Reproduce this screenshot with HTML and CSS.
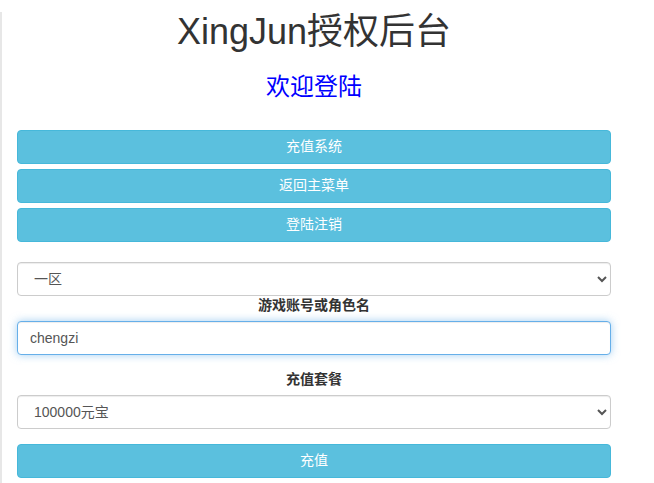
FILE: index.html
```html
<!DOCTYPE html>
<html lang="zh-CN">
<head>
    <meta charset="UTF-8">
    <meta name="viewport" content="width=device-width, initial-scale=1.0">
    <title>XingJun授权后台</title>
    <link rel="stylesheet" href="styles.css">
</head>
<body>
    <div class="page">
        <div class="panel">
            <h1 class="title">XingJun授权后台</h1>
            <h3 class="welcome">欢迎登陆</h3>

            <div class="menu">
                <button class="btn">充值系统</button>
                <button class="btn">返回主菜单</button>
                <button class="btn">登陆注销</button>
            </div>

            <form class="pay-form">
                <select class="form-control">
                    <option>一区</option>
                    <option>二区</option>
                </select>
                <label class="form-label">游戏账号或角色名</label>
                <input class="form-control focused" type="text" value="chengzi">

                <div class="form-group">
                    <label class="form-label">充值套餐</label>
                    <select class="form-control">
                        <option>100000元宝</option>
                        <option>50000元宝</option>
                    </select>
                </div>

                <button type="button" class="btn">充值</button>
            </form>
        </div>
    </div>
</body>
</html>
```

FILE: styles.css
```css
* {
    box-sizing: border-box;
}

body {
    margin: 0;
    background: #fff;
    font-family: "Liberation Sans", "Noto Sans CJK SC", sans-serif;
    font-size: 14px;
    line-height: 1.42857;
    color: #333;
}

.page {
    min-height: 100vh;
    border-left: 2px solid #e7e7e7;
    padding-left: 15px;
}

.panel {
    width: 594px;
}

.title {
    margin: 12px 0 0;
    font-size: 36px;
    font-weight: 400;
    line-height: 1.1;
    text-align: center;
    color: #333;
}

.welcome {
    margin: 22px 0 0;
    font-size: 24px;
    font-weight: 400;
    line-height: 1.1;
    text-align: center;
    color: #0000ff;
}

.menu {
    display: flex;
    flex-direction: column;
    gap: 5px;
    margin-top: 30px;
}

.btn {
    display: block;
    width: 100%;
    height: 34px;
    padding: 6px 12px;
    font-family: inherit;
    font-size: 14px;
    line-height: 1.42857;
    color: #fff;
    background: #5bc0de;
    border: 1px solid #46b8da;
    border-radius: 4px;
    cursor: pointer;
}

.pay-form {
    margin-top: 20px;
}

.form-control {
    display: block;
    width: 100%;
    height: 34px;
    padding: 6px 12px;
    font-family: inherit;
    font-size: 14px;
    color: #555;
    background: #fff;
    border: 1px solid #ccc;
    border-radius: 4px;
    box-shadow: inset 0 1px 1px rgba(0, 0, 0, 0.075);
}

.form-control.focused {
    border-color: #66afe9;
    outline: 0;
    box-shadow: inset 0 1px 1px rgba(0, 0, 0, 0.075), 0 0 8px rgba(102, 175, 233, 0.6);
}

.form-label {
    display: block;
    margin-bottom: 5px;
    font-weight: 700;
    text-align: center;
    color: #333;
}

.form-group {
    margin: 15px 0;
}
```
